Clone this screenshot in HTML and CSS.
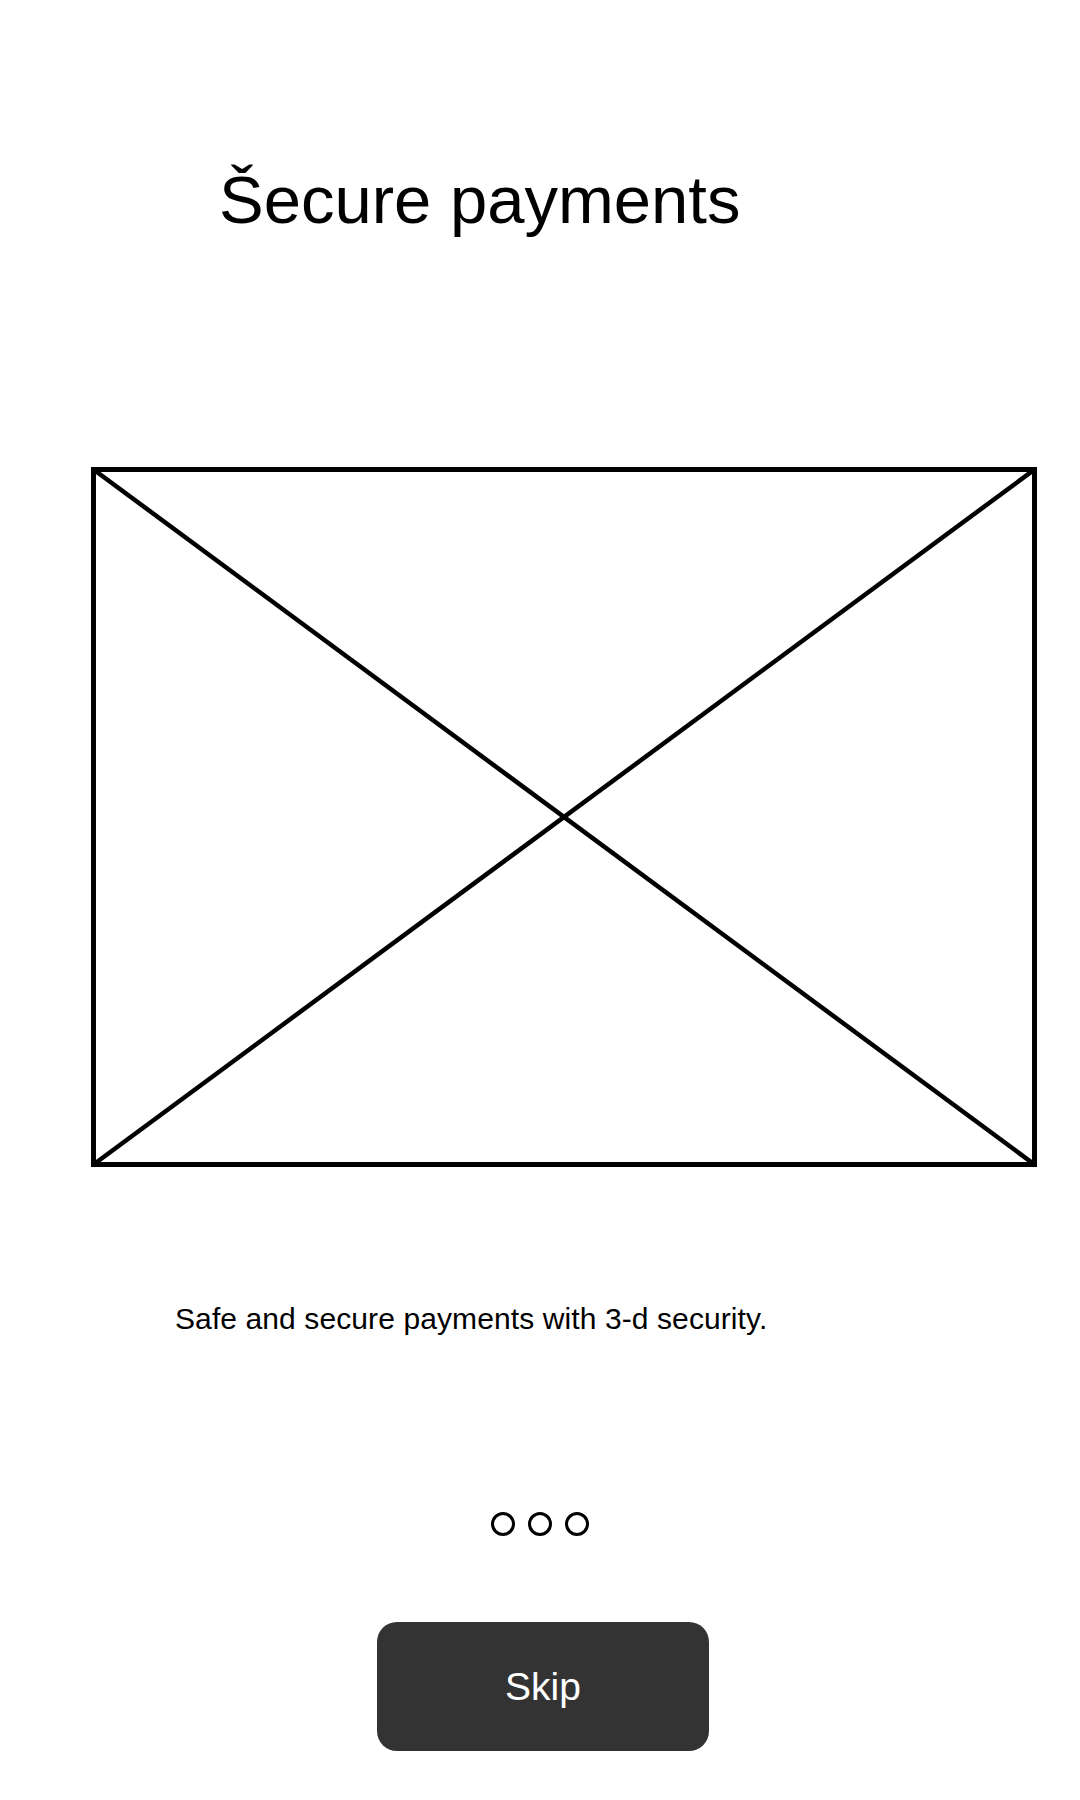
FILE: index.html
```html
<!DOCTYPE html>
<html lang="en">
<head>
<meta charset="utf-8">
<title>Secure payments</title>
<link rel="stylesheet" href="styles.css">
</head>
<body>
<main class="screen">
  <h1 class="title">Šecure payments</h1>
  <div class="placeholder">
    <svg class="placeholder-art" viewBox="0 0 946 700" width="946" height="700" aria-hidden="true">
      <rect x="2.5" y="2.5" width="941" height="695" fill="none" stroke="#000" stroke-width="5"/>
      <line x1="2.5" y1="2.5" x2="943.5" y2="697.5" stroke="#000" stroke-width="4.5"/>
      <line x1="943.5" y1="2.5" x2="2.5" y2="697.5" stroke="#000" stroke-width="4.5"/>
    </svg>
  </div>
  <p class="subtitle">Safe and secure payments with 3-d security.</p>
  <div class="dots">
    <span class="dot"></span>
    <span class="dot"></span>
    <span class="dot"></span>
  </div>
  <button class="skip" type="button">Skip</button>
</main>
</body>
</html>
```
FILE: styles.css
```css
html, body {
  margin: 0;
  padding: 0;
  background: #ffffff;
}

body {
  font-family: "Liberation Sans", Arial, sans-serif;
  color: #000000;
}

.screen {
  width: 1080px;
  min-height: 1800px;
  display: flex;
  flex-direction: column;
  align-items: flex-start;
  box-sizing: border-box;
  padding-top: 166px;
}

.title {
  margin: 0 0 0 219px;
  font-size: 67px;
  font-weight: 400;
  line-height: 1;
}

.placeholder {
  margin: 234px 0 0 91px;
  width: 946px;
  height: 700px;
}

.placeholder-art {
  display: block;
}

.subtitle {
  margin: 137px 0 0 175px;
  font-size: 30px;
  line-height: 1;
  letter-spacing: 0.1px;
}

.dots {
  align-self: stretch;
  display: flex;
  justify-content: center;
  gap: 13px;
  margin-top: 178px;
}

.dot {
  width: 24px;
  height: 24px;
  box-sizing: border-box;
  border: 3px solid #000;
  border-radius: 50%;
}

.skip {
  margin: 86px 0 0 377px;
  width: 332px;
  height: 129px;
  border: none;
  border-radius: 20px;
  background: #333333;
  color: #ffffff;
  font-family: "Liberation Sans", Arial, sans-serif;
  font-size: 39px;
  padding: 0;
}
```
